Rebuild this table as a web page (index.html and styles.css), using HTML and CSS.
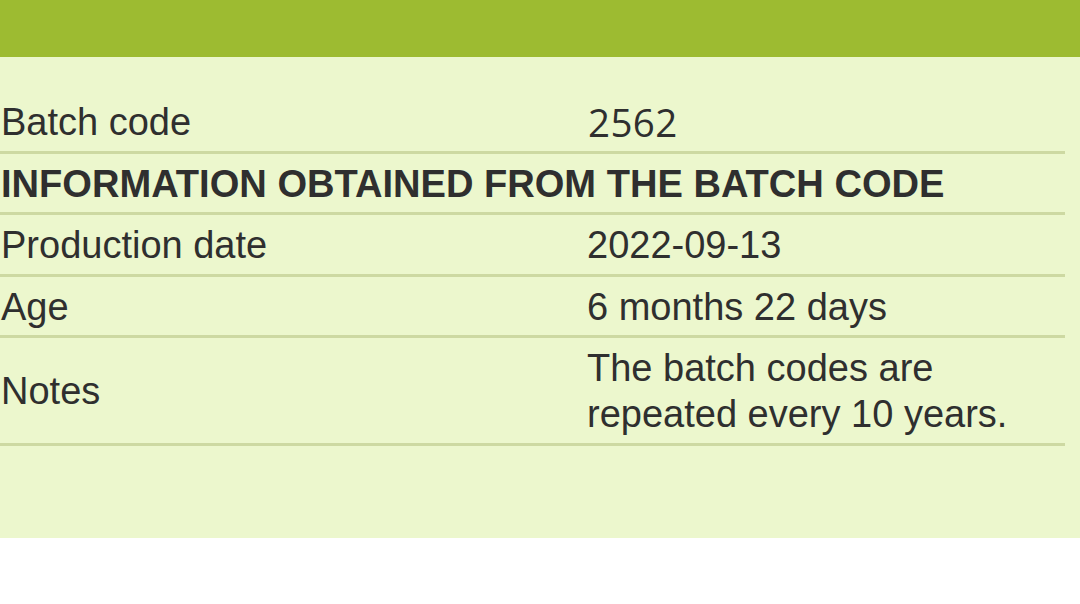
FILE: index.html
```html
<!DOCTYPE html>
<html>
<head>
<meta charset="utf-8">
<link rel="stylesheet" href="styles.css">
</head>
<body>
<header class="topbar"></header>
<section class="panel">
  <div class="info">
    <div class="row">
      <div class="label">Batch code</div>
      <div class="value code">2562</div>
    </div>
    <div class="row">
      <div class="heading">INFORMATION OBTAINED FROM THE BATCH CODE</div>
    </div>
    <div class="row">
      <div class="label">Production date</div>
      <div class="value">2022-09-13</div>
    </div>
    <div class="row">
      <div class="label">Age</div>
      <div class="value">6 months 22 days</div>
    </div>
    <div class="row">
      <div class="label">Notes</div>
      <div class="value">The batch codes are repeated every 10 years.</div>
    </div>
  </div>
</section>
</body>
</html>
```
FILE: styles.css
```css
html, body {
  margin: 0;
  padding: 0;
  background: #ffffff;
}
body {
  font-family: "Liberation Sans", Arial, sans-serif;
  color: #2f2f2f;
}
.topbar {
  height: 57px;
  background: #9dbb31;
}
.panel {
  background: #ecf7cd;
  padding: 35px 15px 92px 0;
}
.info {
  display: flex;
  flex-direction: column;
}
.row {
  display: grid;
  grid-template-columns: 587px 1fr;
  align-items: center;
  padding: 7px 0 5.5px;
  border-bottom: 3px solid #cdd9a2;
  font-size: 38px;
  line-height: 46px;
}
.label {
  padding-left: 1px;
}
.value {
  padding-right: 40px;
}
.code {
  font-family: "Open Sans", sans-serif;
  font-size: 38.5px;
  letter-spacing: 0.4px;
  padding-left: 1px;
}
.heading {
  grid-column: 1 / -1;
  font-weight: bold;
  font-size: 38.1px;
  white-space: nowrap;
  padding-left: 1px;
}
```
